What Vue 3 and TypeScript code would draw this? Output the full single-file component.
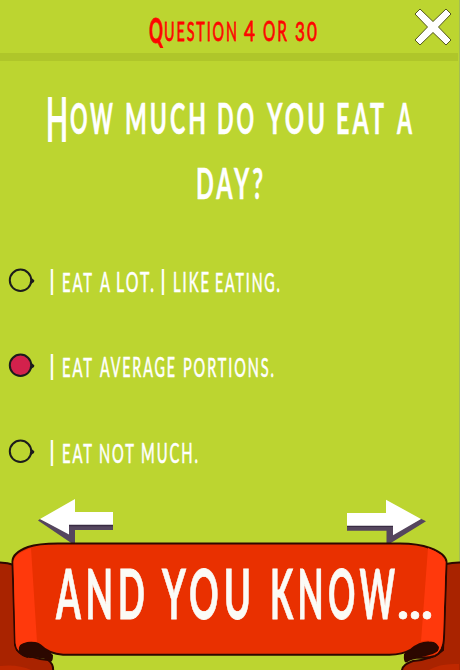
<script setup lang="ts">
import { onMounted, ref } from 'vue'

interface Word { t: string; x: number; w: number; big?: boolean }

const counter: Word[] = [
  { t: 'Q', x: 149, w: 14, big: true },
  { t: 'UESTION', x: 164, w: 73 },
  { t: '4', x: 244, w: 11 },
  { t: 'OR', x: 263, w: 24 },
  { t: '30', x: 295, w: 22 },
]

const question: Word[][] = [
  [
    { t: 'H', x: 46, w: 22, big: true },
    { t: 'OW', x: 70, w: 43 },
    { t: 'MUCH', x: 125, w: 81 },
    { t: 'DO', x: 217, w: 37 },
    { t: 'YOU', x: 267, w: 58 },
    { t: 'EAT', x: 336, w: 48 },
    { t: 'A', x: 397, w: 15 },
  ],
  [{ t: 'DAY?', x: 196, w: 67 }],
]

const options: Word[][] = [
  [
    { t: 'I', x: 49, w: 6, big: true },
    { t: 'EAT', x: 62, w: 30 },
    { t: 'A', x: 100, w: 10 },
    { t: 'LOT.', x: 116, w: 38 },
    { t: 'I', x: 160, w: 6, big: true },
    { t: 'LIKE', x: 173, w: 36 },
    { t: 'EATING.', x: 215, w: 65 },
  ],
  [
    { t: 'I', x: 49, w: 6, big: true },
    { t: 'EAT', x: 62, w: 30 },
    { t: 'AVERAGE', x: 100, w: 75 },
    { t: 'PORTIONS.', x: 183, w: 91 },
  ],
  [
    { t: 'I', x: 49, w: 6, big: true },
    { t: 'EAT', x: 62, w: 30 },
    { t: 'NOT', x: 99, w: 35 },
    { t: 'MUCH.', x: 141, w: 57 },
  ],
]

const banner: Word[] = [
  { t: 'AND', x: 56, w: 89 },
  { t: 'YOU', x: 162, w: 89 },
  { t: 'KNOW', x: 270, w: 125 },
  { t: '...', x: 397, w: 36, big: true },
]

const selected = ref(1)
const root = ref<HTMLElement>()

// Condense every word horizontally to its set width, keeping its full height.
onMounted(() => {
  root.value?.querySelectorAll<SVGTextElement>('text').forEach((el) => {
    const spacing = parseFloat(getComputedStyle(el).letterSpacing) || 0
    const natural = el.getComputedTextLength() - spacing
    const { x, y, w } = el.dataset
    el.setAttribute('transform', `translate(${x} ${y}) scale(${Number(w) / natural} 1)`)
  })
})
</script>

<template>
  <main ref="root" class="quiz">
    <header class="top">
      <svg class="counter" width="458" height="53" viewBox="0 0 458 53">
        <text v-for="w in counter" :key="w.x" :data-x="w.x" :data-y="w.big ? 43 : 41" :data-w="w.w"
          :class="{ big: w.big }">{{ w.t }}</text>
      </svg>
      <svg class="close" width="38" height="38" viewBox="0 0 38 38">
        <path d="M6 1 L19 13.5 L32 1 L37 6 L24.5 19 L37 32 L32 37 L19 24.5 L6 37 L1 32 L13.5 19 L1 6 Z" />
      </svg>
    </header>

    <h1 class="question">
      <svg v-for="(line, i) in question" :key="i" width="460" height="65" viewBox="0 0 460 65">
        <text v-for="w in line" :key="w.x" :data-x="w.x" :data-y="w.big ? 60 : 53" :data-w="w.w"
          :class="{ big: w.big }">{{ w.t }}</text>
      </svg>
    </h1>

    <ul class="options">
      <li v-for="(line, i) in options" :key="i" @click="selected = i">
        <svg width="460" height="46" viewBox="0 0 460 46">
          <circle class="ring" :class="{ on: selected === i }" cx="20.5" cy="22.3" r="10.7" />
          <path class="knob" d="M31 19.5 L34.3 22.3 L34 24 L31 26 Z" />
          <text v-for="w in line" :key="w.x" :data-x="w.x" :data-y="w.big ? 37 : 34" :data-w="w.w"
            :class="{ big: w.big }">{{ w.t }}</text>
        </svg>
      </li>
    </ul>

    <nav class="arrows">
      <svg width="76" height="46" viewBox="38 498 76 46">
        <path class="shade" d="M40 519 L38 520.5 L72 543.5 H75 V530 H113 V524 H69 V533 Z" />
        <path class="line" d="M69 524 H113 V526.3 H69 Z" />
        <path class="face" d="M40 519 L75 499 V512 H113 V524.7 H69 V534.5 Z" />
      </svg>
      <svg width="80" height="46" viewBox="347 498 80 46">
        <path class="shade" d="M421 518.7 L426 521.3 L390 543.5 H386.5 V530.7 H347 V525 H393 V534 Z" />
        <path class="line" d="M347 525 H393 V527 H347 Z" />
        <path class="face" d="M421 519 L386 499.7 V513 H347 V525.7 H393 V535.3 Z" />
      </svg>
    </nav>

    <svg class="banner" width="460" height="128" viewBox="0 542 460 128">
      <path class="back" d="M-3 562.5 Q7 562 14 565 L17 650 Q28 658 48 660 Q54 664 53 672 H-3 Z" />
      <path class="back" d="M463 562.5 Q453 562 446 564 L443 650 Q434 659 413 661 Q401 665 402 672 H463 Z" />
      <path class="glow" d="M0 666 Q18 664 31 670 H0 Z M429 670 Q440 663 459 664 V670 Z" />
      <path class="hollow" d="M15 645 Q18 657 30 658 Q44 657 49 661 Q53 664 53 655 L38 641 Z" />
      <path class="hollow" d="M444 645 Q441 656 428 658 Q414 658 409 661 Q403 666 404 654 L420 641 Z" />
      <path class="front" d="M15 645 L12.5 562 Q12 553 28 547 Q38 543.5 58 543.5 H400 Q418 543.5 430 548 Q446 554 446.5 562 L444 637 Q443.5 652 435 656 Q426 659 414 657 Q438 654 438.5 648 Q438 642.5 429 642.5 Q420 642 411 649.5 Q402 655 388 654.7 H63 Q49 654 40 645 Q36 642 29 642.5 Q18 644 19.5 650 Q21 654 28 657 Q17 654 15 645 Z" />
      <path class="side" d="M31 548 L37 642 Q27 640 20 645 Q18 648 19 651 Q16 648 15.5 643 L13.5 562 Q14 554 31 548 Z" />
      <path class="side" d="M428 548 L421 641.5 Q434 638 439 647 Q439 652 434 655 Q442 652 443 638 L445.5 562 Q444 554 428 548 Z" />
      <text v-for="w in banner" :key="w.x" :data-x="w.x" data-y="619" :data-w="w.w"
        :class="{ dots: w.big }">{{ w.t }}</text>
    </svg>
  </main>
</template>

<style>
body {
  margin: 0;
}
</style>

<style scoped>
.quiz {
  box-sizing: border-box;
  display: flex;
  flex-direction: column;
  width: 460px;
  height: 670px;
  overflow: hidden;
  background: linear-gradient(#a3bd55, #a3bd55) right / 1px 100% no-repeat #bcd530;
  font-family: Lato, "Open Sans", sans-serif;
}
svg {
  display: block;
  flex: none;
}
text {
  letter-spacing: 0.13em;
}
.top {
  position: relative;
  width: 458px;
  height: 53px;
  border-bottom: 8px solid #afc62a;
}
.counter {
  fill: #fe0500;
  font-size: 26.5px;
}
.counter .big {
  font-size: 35px;
  font-weight: 700;
}
.counter text {
  stroke: #fe0500;
  stroke-width: 0.8px;
}
.close {
  position: absolute;
  left: 414px;
  top: 8px;
  fill: #fff;
  stroke: #54571f;
  stroke-width: 1px;
}
.question {
  margin: 20px 0 0;
  font-size: 41.5px;
  font-weight: 700;
  fill: #fff;
}
.question text {
  stroke: #fff;
  stroke-width: 0.5px;
}
.question .big {
  font-size: 60px;
  font-weight: 400;
  stroke-width: 2px;
}
.options {
  display: flex;
  flex-direction: column;
  gap: 39.3px;
  margin: 47px 0 0;
  padding: 0;
  list-style: none;
  font-size: 26.5px;
  fill: #fff;
}
.options li {
  cursor: pointer;
}
.options text {
  stroke: #fff;
  stroke-width: 0.6px;
}
.options .big {
  font-size: 36px;
  stroke: none;
}
.ring {
  fill: none;
  stroke: #1c1c1c;
  stroke-width: 2px;
}
.ring.on {
  fill: #d3214c;
}
.knob {
  fill: #1c1c1c;
}
.arrows {
  display: flex;
  justify-content: space-between;
  padding: 0 33px 0 38px;
  margin-top: auto;
}
.shade {
  fill: #55465e;
}
.line {
  fill: #382b42;
}
.face {
  fill: #fff;
}
.banner {
  margin-top: -2px;
  font-size: 69px;
  font-weight: 700;
  fill: #fbfbf6;
}
.banner text {
  stroke: #fbfbf6;
  stroke-width: 0.8px;
}
.banner .dots {
  font-size: 50px;
  font-weight: 700;
  letter-spacing: 0;
}
.back {
  fill: #a92300;
  stroke: #2c0800;
  stroke-width: 2px;
}
.glow {
  fill: #bf2800;
}
.hollow {
  fill: #2c0800;
}
.front {
  fill: #e93000;
  stroke: #2c0800;
  stroke-width: 2px;
}
.side {
  fill: #ff390c;
}
</style>
